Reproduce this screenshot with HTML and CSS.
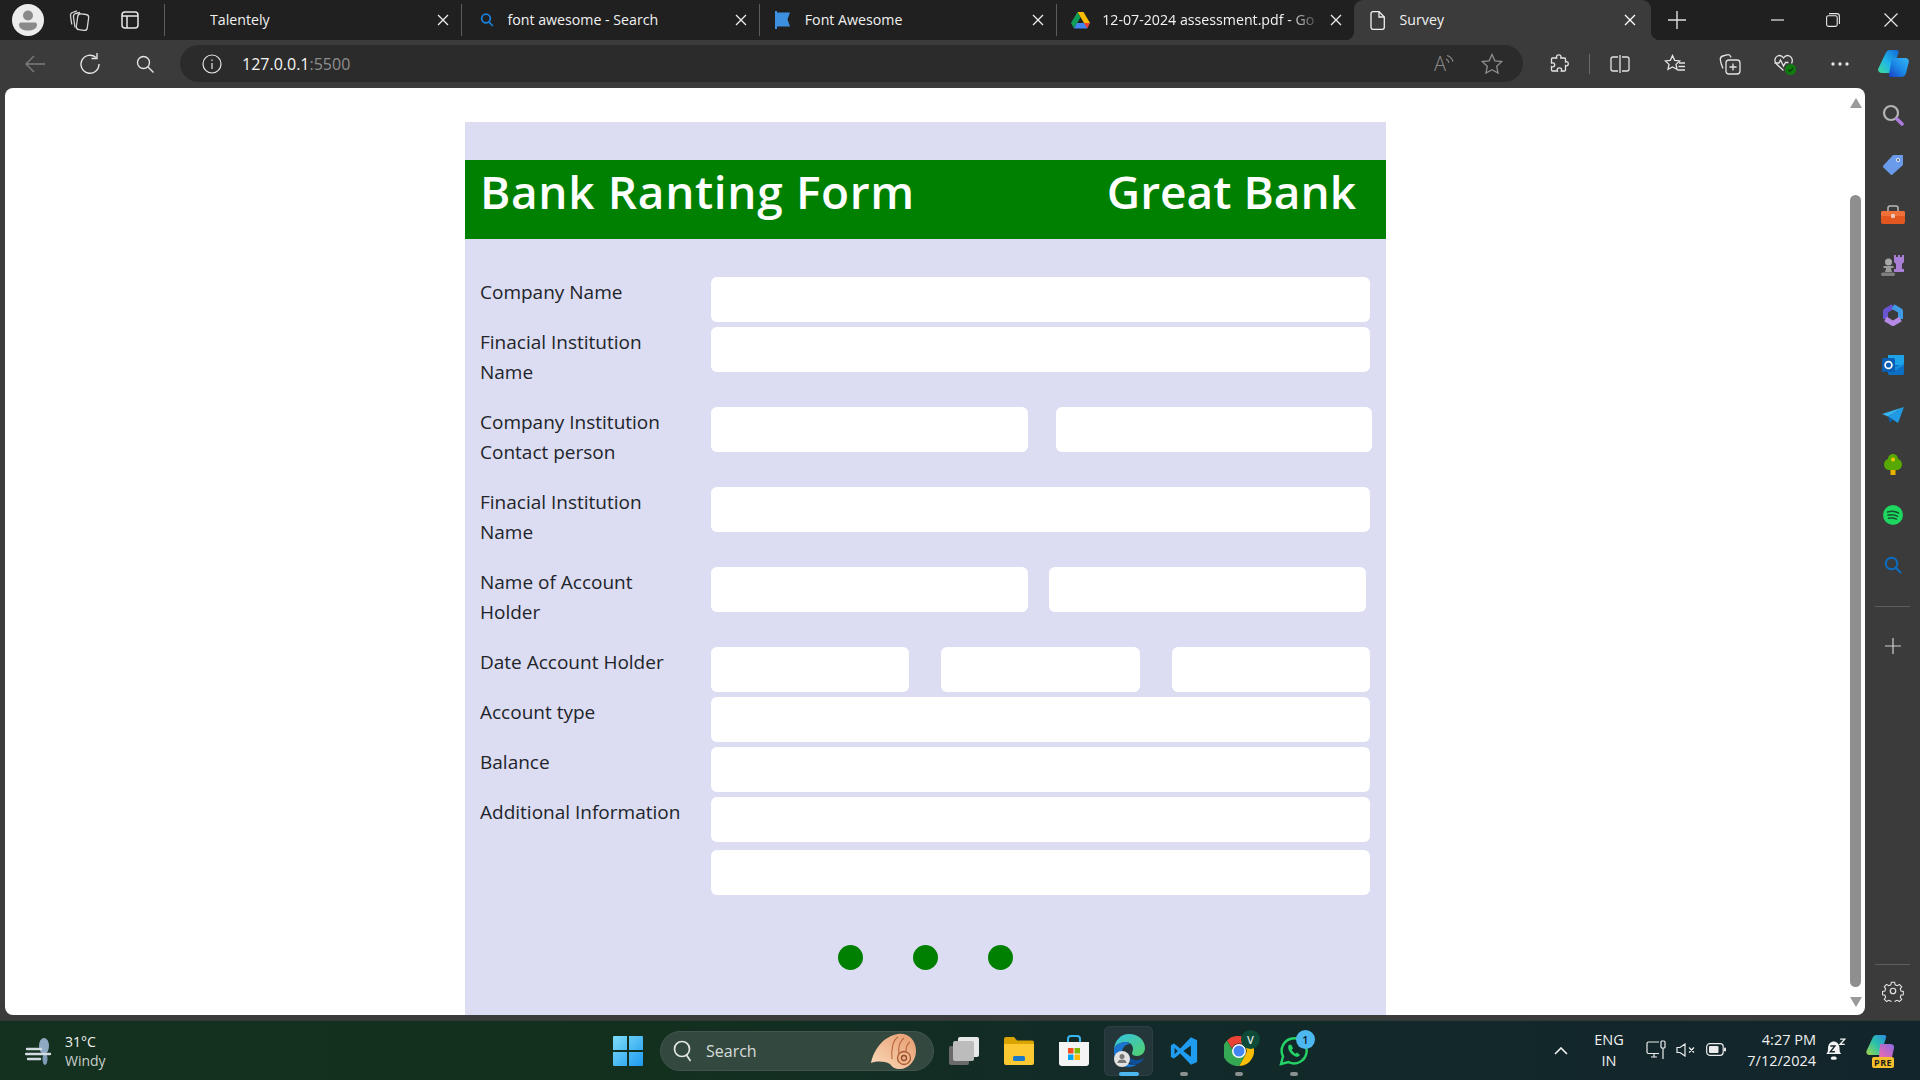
FILE: index.html
```html
<!DOCTYPE html>
<html lang="en">
<head>
    <meta charset="UTF-8">
    <meta name="viewport" content="width=device-width, initial-scale=1.0">
    <title>Survey</title>
    <link rel="stylesheet" href="styles.css">
</head>
<body>

<!-- Tab strip -->
<div class="tabstrip">
  <div class="strip-left">
    <svg class="avatar" width="32" height="32" viewBox="0 0 32 32"><circle cx="16" cy="16" r="16" fill="#ececec"/><circle cx="16" cy="11.5" r="5" fill="#8a8a8a"/><path d="M7 20.5c0-1.2 1-2 2-2h14c1 0 2 .8 2 2 0 4-4 6-9 6s-9-2-9-6z" fill="#8a8a8a"/></svg>
    <svg class="strip-icon" width="24" height="24" viewBox="0 0 24 24" fill="none" stroke="#d5d5d5" stroke-width="1.3"><rect x="10" y="6" width="11" height="16" rx="3" transform="rotate(8 15 14)"/><path d="M8 19.500 6.500 9C6.300 7 7 6 8.500 5.500L13 4.500M4.800 16.500 3.500 8C3.300 6 4 5 5.500 4.500L10 2.800"/></svg>
    <svg class="strip-icon" width="20" height="20" viewBox="0 0 20 20" fill="none" stroke="#e6e6e6" stroke-width="1.5"><rect x="2" y="2" width="16" height="16" rx="3"/><path d="M2 6h16M7 6v12" /></svg>
  </div>
  <div class="tab">
    <span class="fav"></span>
    <span class="tab-title">Talentely</span>
    <svg class="tab-x" width="12" height="12" viewBox="0 0 12 12"><path d="M1 1l10 10M11 1L1 11" stroke="#eee" stroke-width="1.300"/></svg>
  </div>
  <div class="tab">
    <span class="fav"><svg width="16" height="16" viewBox="0 0 16 16" fill="none" stroke="#1a7fd6" stroke-width="1.800"><circle cx="7" cy="6.500" r="4.300"/><path d="M10 10l3.800 4"/></svg></span>
    <span class="tab-title">font awesome - Search</span>
    <svg class="tab-x" width="12" height="12" viewBox="0 0 12 12"><path d="M1 1l10 10M11 1L1 11" stroke="#eee" stroke-width="1.300"/></svg>
  </div>
  <div class="tab">
    <span class="fav fav-left"><svg width="18" height="18" viewBox="0 0 18 18"><path d="M1 0h2v1.500h13l-2.500 7 2.500 7H3V18H1z" fill="#3d8fe0"/></svg></span>
    <span class="tab-title">Font Awesome</span>
    <svg class="tab-x" width="12" height="12" viewBox="0 0 12 12"><path d="M1 1l10 10M11 1L1 11" stroke="#eee" stroke-width="1.300"/></svg>
  </div>
  <div class="tab">
    <span class="fav fav-left"><svg width="19" height="17" viewBox="0 0 19 17"><path d="M6.500 0h6l6.500 11h-6z" fill="#fbbc04"/><path d="M6.500 0 0 11l3 5.500L9.500 5.500z" fill="#0f9d58"/><path d="M3 16.500h13l3-5.500H6z" fill="#4285f4"/><path d="M13 11h6l-3 5.500z" fill="#ea4335"/></svg></span>
    <span class="tab-title tab-fade">12-07-2024 assessment.pdf - Go</span>
    <svg class="tab-x" width="12" height="12" viewBox="0 0 12 12"><path d="M1 1l10 10M11 1L1 11" stroke="#eee" stroke-width="1.300"/></svg>
  </div>
  <div class="tab tab-active">
    <span class="fav fav-left"><svg width="15" height="19" viewBox="0 0 15 19" fill="none" stroke="#f0f0f0" stroke-width="1.300"><path d="M3 .7h6L14.300 6v10.300a2 2 0 0 1-2 2H3a2 2 0 0 1-2-2V2.700a2 2 0 0 1 2-2z"/><path d="M9 .7V6h5.300"/></svg></span>
    <span class="tab-title">Survey</span>
    <svg class="tab-x" width="12" height="12" viewBox="0 0 12 12"><path d="M1 1l10 10M11 1L1 11" stroke="#fff" stroke-width="1.300"/></svg>
  </div>
  <div class="new-tab"><svg width="18" height="18" viewBox="0 0 18 18"><path d="M9 0v18M0 9h18" stroke="#e0e0e0" stroke-width="1.400"/></svg></div>
  <div class="win-controls">
    <span class="win-btn"><svg width="13" height="2" viewBox="0 0 13 2"><path d="M0 1h13" stroke="#e8e8e8" stroke-width="1.200"/></svg></span>
    <span class="win-btn"><svg width="14" height="14" viewBox="0 0 14 14" fill="none" stroke="#e8e8e8" stroke-width="1.100"><rect x=".6" y="2.800" width="10.600" height="10.600" rx="1.800"/><path d="M3 .6h8a2.400 2.400 0 0 1 2.400 2.400v8"/></svg></span>
    <span class="win-btn"><svg width="14" height="14" viewBox="0 0 14 14"><path d="M.5.500l13 13M13.500.500l-13 13" stroke="#e8e8e8" stroke-width="1.200"/></svg></span>
  </div>
</div>

<!-- Toolbar -->
<div class="toolbar">
  <div class="nav-btns">
    <span class="tbtn"><svg width="20" height="18" viewBox="0 0 20 18" fill="none" stroke="#7c7c7c" stroke-width="1.400"><path d="M20 9H1M9 1 1 9l8 8"/></svg></span>
    <span class="tbtn"><svg width="20" height="22" viewBox="0 0 20 22" fill="none" stroke="#e4e4e4" stroke-width="1.400"><path d="M16 4.500A9 9 0 1 0 19 11"/><path d="M17 0v5.500h-5.500"/></svg></span>
    <span class="tbtn"><svg width="18" height="18" viewBox="0 0 18 18" fill="none" stroke="#e4e4e4" stroke-width="1.400"><circle cx="7.500" cy="7.500" r="6"/><path d="M12 12l5.500 5.500"/></svg></span>
  </div>
  <div class="address">
    <svg class="info" width="20" height="20" viewBox="0 0 20 20" fill="none" stroke="#e4e4e4" stroke-width="1.200"><circle cx="10" cy="10" r="9"/><path d="M10 9v6M10 5.500v1.400"/></svg>
    <span class="url">127.0.0.1<span class="url-port">:5500</span></span>
    <span class="addr-right">
      <span class="aloud">A</span>
      <svg class="aloud-waves" width="9" height="10" viewBox="0 0 9 10" fill="none" stroke="#8a8a8a" stroke-width="1.200"><path d="M1 5c1.500.6 2.500 2 3 3.800M2 1.500c3 .8 5 3 6 6"/></svg>
      <svg class="addr-star" width="22" height="22" viewBox="0 0 22 22" fill="none" stroke="#8e8e8e" stroke-width="1.300"><path d="M11 1.500l2.900 6.300 6.800.8-5 4.700 1.300 6.800L11 16.800l-6 3.300 1.300-6.800-5-4.700 6.800-.8z"/></svg>
    </span>
  </div>
  <div class="tool-btns">
    <span class="tbtn"><svg width="20" height="20" viewBox="0 0 20 20" fill="none" stroke="#e4e4e4" stroke-width="1.300"><path d="M7.500 2.800C7.500 1.500 8.500.8 9.800.8s2.200.8 2.200 2c0 .5-.1.800-.2 1.200h3.700c.6 0 1 .4 1 1v3c.5-.3 1-.4 1.300-.3 1.100.1 1.500 1 1.500 2.100s-.6 2.100-1.700 2.100c-.4 0-.8-.1-1.100-.3v4.400c0 .6-.4 1-1 1h-3.200c.2-.5.300-.9.300-1.300 0-1-1-1.800-2.200-1.800s-2.200.8-2.200 1.800c0 .4.100.8.300 1.300H3.500c-.6 0-1-.4-1-1v-3.500c.5.200 1 .3 1.300.3 1.100 0 1.900-.9 1.900-2s-.8-2-1.900-2c-.3 0-.8.100-1.300.3V5c0-.6.400-1 1-1h4.200c-.1-.4-.2-.8-.2-1.200z"/></svg></span>
    <span class="tool-sep"></span>
    <span class="tbtn"><svg width="20" height="20" viewBox="0 0 20 20" fill="none" stroke="#e4e4e4" stroke-width="1.300"><path d="M8 3H3a2 2 0 0 0-2 2v10a2 2 0 0 0 2 2h5M12 3h5a2 2 0 0 1 2 2v10a2 2 0 0 1-2 2h-5M10 1v18"/></svg></span>
    <span class="tbtn"><svg width="22" height="20" viewBox="0 0 22 20" fill="none" stroke="#e4e4e4" stroke-width="1.300"><path d="M8.500 1.500l2.200 4.800 5 .6-3.700 3.500 1 5L8.500 13 4 15.400l1-5L1.300 6.900l5-.6zM15 9h6M14.500 12.500H21M13 16h8"/></svg></span>
    <span class="tbtn"><svg width="22" height="22" viewBox="0 0 22 22" fill="none" stroke="#e4e4e4" stroke-width="1.300"><rect x="7" y="7" width="14" height="14" rx="3"/><path d="M14 10.500v7M10.500 14h7M4 15.500C2.500 12 1.500 9 1.300 6.500 1.200 4.500 2 3.500 3.800 3L8 1.800c1.500-.4 2.800.2 3.500 1.500L12 4.500"/></svg></span>
    <span class="tbtn"><svg width="24" height="24" viewBox="0 0 24 24" fill="none" stroke="#e4e4e4" stroke-width="1.300"><path d="M10.500 18.500 3.500 12C1 9.500 1.500 5.500 4.500 4c2.200-1 4.500-.2 6 1.800C12 3.800 14.300 3 16.500 4c3 1.500 3.500 4.800 2 7.500"/><path d="M1.500 11H6l1.500-3 3 6 2-3.500h3"/><circle cx="17.500" cy="17.500" r="5.500" fill="#107c10" stroke="none"/><path d="M15 17.500l2 2 3-3.500" stroke="#0b3d0b"/></svg></span>
    <span class="tbtn"><svg width="18" height="4" viewBox="0 0 18 4" fill="#e4e4e4"><circle cx="2" cy="2" r="1.700"/><circle cx="9" cy="2" r="1.700"/><circle cx="16" cy="2" r="1.700"/></svg></span>
    <span class="tbtn"><svg width="31" height="27" viewBox="0 0 31 27"><defs><linearGradient id="cpA" x1="0" y1="1" x2="1" y2="0"><stop offset="0" stop-color="#3ddc97"/><stop offset=".45" stop-color="#20b5e8"/><stop offset="1" stop-color="#1467d6"/></linearGradient><linearGradient id="cpB" x1="0" y1="1" x2="1" y2="0"><stop offset="0" stop-color="#1b3fc4"/><stop offset=".5" stop-color="#1a8ae8"/><stop offset="1" stop-color="#38b6f5"/></linearGradient></defs><path d="M8 2.500C9 .8 10.500 0 12 0h6.500c2 0 2.500 1.500 2 3L14 21c-.6 1.600-1.800 2-3 2H4C1 23-.5 21 .3 18.500z" fill="url(#cpA)"/><path d="M14 8h13c2.500 0 4.300 1.500 3.800 4l-2.600 10.500C27.600 25.500 25.500 27 23 27H13c-2 0-2.500-1.300-2-3z" fill="url(#cpB)"/></svg></span>
  </div>
</div>

<div class="main">
  <div class="viewport">
    <div class="page">

      <div class="panel">
        <div class="form-head">
          <h1 class="head-title">Bank Ranting Form</h1>
          <h1>Great Bank</h1>
        </div>

        <div class="form-row">
          <label class="row-label">Company Name</label>
          <div class="row-inputs"><input type="text"></div>
        </div>
        <div class="form-row">
          <label class="row-label">Finacial Institution Name</label>
          <div class="row-inputs"><input type="text"></div>
        </div>
        <div class="form-row">
          <label class="row-label">Company Institution Contact person</label>
          <div class="row-inputs two-wide"><input type="text"><input type="text"></div>
        </div>
        <div class="form-row">
          <label class="row-label">Finacial Institution Name</label>
          <div class="row-inputs"><input type="text"></div>
        </div>
        <div class="form-row">
          <label class="row-label">Name of Account Holder</label>
          <div class="row-inputs two-tight"><input type="text"><input type="text"></div>
        </div>
        <div class="form-row">
          <label class="row-label">Date Account Holder</label>
          <div class="row-inputs three"><input type="text"><input type="text"><input type="text"></div>
        </div>
        <div class="form-row">
          <label class="row-label">Account type</label>
          <div class="row-inputs"><input type="text"></div>
        </div>
        <div class="form-row">
          <label class="row-label">Balance</label>
          <div class="row-inputs"><input type="text"></div>
        </div>
        <div class="form-row">
          <label class="row-label">Additional Information</label>
          <div class="row-inputs stacked"><input type="text"><input type="text"></div>
        </div>

        <div class="dots">
          <span class="dot"></span>
          <span class="dot"></span>
          <span class="dot"></span>
        </div>
      </div>

    </div>
    <div class="scrollbar">
      <span class="arrow-up"></span>
      <span class="thumb"></span>
      <span class="arrow-down"></span>
    </div>
  </div>

  <!-- Edge sidebar -->
  <div class="sidebar">
    <span class="side-btn"><svg width="22" height="22" viewBox="0 0 22 22" fill="none"><circle cx="9" cy="9" r="7" stroke="#b4b4b4" stroke-width="2.200"/><path d="M15 15l5 5" stroke="#b07be0" stroke-width="3.500" stroke-linecap="round"/></svg></span>
    <span class="side-btn"><svg width="22" height="22" viewBox="0 0 22 22"><path d="M12 1h8c.6 0 1 .4 1 1v8c0 .6-.2 1-.6 1.400L10.500 20.600c-.6.500-1.300.500-1.900 0L1.400 13.400c-.5-.6-.5-1.300 0-1.900L10.600 1.600C11 1.200 11.400 1 12 1z" fill="#6a9bea"/><circle cx="16" cy="6" r="2" fill="#e8eef8"/><circle cx="16" cy="6" r="1" fill="#33476b"/></svg></span>
    <span class="side-btn"><svg width="24" height="20" viewBox="0 0 24 20"><path d="M7 6V3a2 2 0 0 1 2-2h6a2 2 0 0 1 2 2v3" fill="none" stroke="#b9b9b9" stroke-width="1.500"/><rect y="6" width="24" height="13" rx="2" fill="#e2561f"/><rect y="6" width="24" height="5" rx="1.500" fill="#f0703a"/><rect x="10" y="9" width="4" height="4" rx="1" fill="#e9c6b6"/></svg></span>
    <span class="side-btn"><svg width="24" height="24" viewBox="0 0 24 24"><path d="M13 2h2v2h2V2h2v2h2V2h2v7l-2 2v5h2v3H13v-3h2v-5l-2-2z" fill="#a97fd6"/><circle cx="7.500" cy="9" r="3.500" fill="#a8a8a8"/><path d="M2.500 13h10v2h-2.700l1.200 4H4l1.200-4H2.500z" fill="#9a9a9a"/><rect y="19.500" width="14" height="3.500" rx="1.700" fill="#7e7e7e"/></svg></span>
    <span class="side-btn"><svg width="22" height="24" viewBox="0 0 22 24" fill="none" stroke-width="5" stroke-linejoin="round"><path d="M3.500 16V8L11 3.500" stroke="#6a55d0"/><path d="M18.500 16V8L11 3.500" stroke="#3f9be6"/><path d="M18.500 16 11 20.500 3.500 16" stroke="#b58ae4"/></svg></span>
    <span class="side-btn"><svg width="22" height="20" viewBox="0 0 22 20"><path d="M6 0h16v10H6z" fill="#1fa3e8"/><path d="M6 10h16v8.500c0 .8-.7 1.500-1.500 1.500H7.500C6.700 20 6 19.300 6 18.500z" fill="#0d6fc4"/><path d="M22 8v2l-8 5-8-5V8l8 4z" fill="#1490df"/><rect y="3" width="13" height="14" rx="1.500" fill="#0a5fb4"/><circle cx="6.500" cy="10" r="3.400" fill="none" stroke="#fff" stroke-width="1.700"/></svg></span>
    <span class="side-btn"><svg width="22" height="16" viewBox="0 0 22 16"><path d="M22 0 0 7l6 2.500z" fill="#34b4f0"/><path d="M22 0 6 9.500 16 16z" fill="#1f9be6"/><path d="M6 9.500 8 16l3-3.500z" fill="#0d5fa8"/></svg></span>
    <span class="side-btn"><svg width="18" height="22" viewBox="0 0 18 22"><rect x="6.500" y="15" width="5" height="6" fill="#e8b400"/><path d="M9 0c3 0 5 2.500 5 5 2.500.5 4 3 4 5.500 0 3-2.500 5.500-5 5.500H5c-2.500 0-5-2.500-5-5.500C0 8 1.500 5.500 4 5c0-2.500 2-5 5-5z" fill="#57a800"/><circle cx="9" cy="5.500" r="2" fill="#f4c20d"/></svg></span>
    <span class="side-btn"><svg width="20" height="20" viewBox="0 0 20 20" fill="none"><circle cx="10" cy="10" r="10" fill="#1ed760"/><path d="M4.500 7c3.500-1 8-.8 11 1M5 10.300c3-.8 6.800-.6 9.500 1M5.500 13.300c2.600-.6 5.600-.4 8 .9" stroke="#14532d" stroke-width="1.500" stroke-linecap="round"/></svg></span>
    <span class="side-btn"><svg width="18" height="18" viewBox="0 0 18 18" fill="none" stroke="#0a6fc9" stroke-width="1.900"><circle cx="7.500" cy="7.500" r="5.800"/><path d="M11.800 11.800l5.200 5.200"/></svg></span>
    <span class="side-line side-line-top"></span>
    <span class="side-plus"><svg width="16" height="16" viewBox="0 0 16 16"><path d="M8 0v16M0 8h16" stroke="#cfcfcf" stroke-width="1.200"/></svg></span>
    <span class="side-line side-line-bottom"></span>
    <span class="side-gear"><svg width="22" height="22" viewBox="0 0 24 24" fill="none" stroke="#e4e4e4" stroke-width="1.300"><circle cx="12" cy="12" r="3"/><path d="M10 1.500h4l.6 3 2.600 1.100 2.600-1.600 2.700 3-1.700 2.500.8 2.500 2.900.5v4l-2.900.6-.8 2.500 1.700 2.500-2.700 2.700-2.600-1.600-2.600 1-.6 3h-4l-.6-3-2.600-1-2.600 1.600-2.800-2.800 1.700-2.500-.9-2.400-2.900-.6v-4l2.900-.5.900-2.500-1.700-2.500 2.800-3 2.600 1.600L9.400 4.500z" transform="translate(1.200 1.200) scale(.9)"/></svg></span>
  </div>
</div>

<!-- Windows taskbar -->
<div class="taskbar">
  <div class="weather">
    <svg width="30" height="30" viewBox="0 0 30 30"><ellipse cx="19" cy="10" rx="5" ry="8" fill="#8fa9c2"/><ellipse cx="20" cy="23" rx="2.500" ry="6" fill="#7f9ab5"/><path d="M2 13h14M1 18h24M3 23h12" stroke="#d3dbe2" stroke-width="2.400" stroke-linecap="round"/></svg>
    <div class="weather-text">
      <span class="temp">31°C</span>
      <span class="cond">Windy</span>
    </div>
  </div>

  <span class="task-start"><svg width="30" height="30" viewBox="0 0 30 30"><defs><linearGradient id="winA" x1="0" y1="0" x2="1" y2="1"><stop offset="0" stop-color="#7fdcf9"/><stop offset="1" stop-color="#1d9bf0"/></linearGradient></defs><path d="M1 0h13v14H0V1a1 1 0 0 1 1-1zM16 0h13a1 1 0 0 1 1 1v13H16zM0 16h14v14H1a1 1 0 0 1-1-1zM16 16h14v13a1 1 0 0 1-1 1H16z" fill="url(#winA)"/></svg></span>

  <div class="task-search">
    <svg width="20" height="22" viewBox="0 0 20 22" fill="none" stroke="#e2e6e6" stroke-width="1.700"><circle cx="9" cy="9" r="7.500"/><path d="M13.500 15l4 6"/></svg>
    <span class="search-word">Search</span>
    <svg class="shell" width="46" height="36" viewBox="0 0 46 36"><defs><linearGradient id="shA" x1="0" y1="1" x2="1" y2="0"><stop offset="0" stop-color="#fbdcbc"/><stop offset="1" stop-color="#e69a6c"/></linearGradient></defs><path d="M0 30C3 16 13 3 27 1c10-1.500 18 6 18 17 0 10-8 18-16 18-5 0-8-2-10-5C13 28 6 28 0 30z" fill="url(#shA)"/><path d="M27 4c-5 3-7 12-6 22M33 5c-4 3-6 9-5 16M39 9c-3 2-4 5-4 9" stroke="#b9643a" stroke-width="1.100" fill="none"/><circle cx="33" cy="25" r="6.500" fill="#efb48a" stroke="#a85a34" stroke-width="1.300"/><circle cx="33" cy="25" r="2.500" fill="none" stroke="#8f4a2b" stroke-width="1.300"/></svg>
  </div>

  <span class="task-app"><svg width="30" height="28" viewBox="0 0 30 28"><rect x="0" y="9" width="20" height="19" rx="2" fill="#6a6a6a"/><rect x="9" y="0" width="21" height="20" rx="2" fill="#e8e8e8"/><rect x="4" y="4" width="21" height="20" rx="2" fill="#bcbcbc"/></svg></span>
  <span class="task-app"><svg width="30" height="28" viewBox="0 0 30 28"><path d="M0 2a2 2 0 0 1 2-2h8l3 3.500h15a2 2 0 0 1 2 2V8H0z" fill="#d9a400"/><path d="M0 7h30v19a2 2 0 0 1-2 2H2a2 2 0 0 1-2-2z" fill="#fcc932"/><rect x="9" y="19" width="12" height="5" rx="1.500" fill="#1a78c8"/></svg></span>
  <span class="task-app"><svg width="30" height="32" viewBox="0 0 30 32"><path d="M9 7V4a3 3 0 0 1 3-3h6a3 3 0 0 1 3 3v3" fill="none" stroke="#38b6f0" stroke-width="2"/><path d="M0 7h30v21a3 3 0 0 1-3 3H3a3 3 0 0 1-3-3z" fill="#f4f4f4"/><rect x="9" y="13" width="5.500" height="5.500" fill="#f25022"/><rect x="15.500" y="13" width="5.500" height="5.500" fill="#7fba00"/><rect x="9" y="19.500" width="5.500" height="5.500" fill="#00a4ef"/><rect x="15.500" y="19.500" width="5.500" height="5.500" fill="#ffb900"/></svg></span>
  <span class="task-app task-active"><svg width="32" height="34" viewBox="0 0 32 34"><defs><linearGradient id="edA" x1="0" y1="0" x2="1" y2="1"><stop offset="0" stop-color="#33c2e8"/><stop offset="1" stop-color="#52d06a"/></linearGradient></defs><path d="M1 15C2 6 8 0 16 0c9 0 16 6 16 14 0 5-4 8-8 8-3 0-5-1-5-3 0-1 1-2 1-4 0-4-3-7-7-7C8 8 3 10 1 15z" fill="url(#edA)"/><path d="M1 15c2-5 7-7 12-7 2 0 3 1 4 2-5 0-8 4-8 9 0 6 5 12 12 12 2 0 3 0 4-1-3 2-6 3-9 3C7 33 0 26 1 15z" fill="#1b76d2"/><path d="M21 31c5-.5 8-3 10-7-2 1-4 2-7 2-4 0-8-2-9-5 0 5 2 9 6 10z" fill="#0f4f9a"/><circle cx="9" cy="25" r="8" fill="#e2e2e2"/><circle cx="9" cy="22.500" r="2.500" fill="#777"/><path d="M4.500 29c0-2.500 2-3.500 4.500-3.500s4.500 1 4.500 3.500z" fill="#777"/></svg></span>
  <span class="task-app task-open"><svg width="30" height="30" viewBox="0 0 24 24"><path fill-rule="evenodd" d="M17.500 1 9 10 4 6 1.500 7.300V16.700L4 18l5-4 8.500 9 5-2.300V3.300zM17.500 7.500 11.500 12l6 4.500zM4.500 9.500 7 12l-2.500 2.500z" fill="#1f9cf0"/></svg></span>
  <span class="task-app task-open chrome-app">
    <svg width="30" height="30" viewBox="0 0 30 30"><path d="M15 0a15 15 0 0 1 13 7.500H15a7.500 7.500 0 0 0-7 5L3 4.500A15 15 0 0 1 15 0z" fill="#ea4335"/><path d="M28 7.500A15 15 0 0 1 15 30l6.500-11.500A7.500 7.500 0 0 0 21 10z" fill="#fbbc04"/><path d="M3 4.500l6.500 11A7.500 7.500 0 0 0 21.500 18.500L15 30A15 15 0 0 1 3 4.500z" fill="#34a853"/><circle cx="15" cy="15" r="7" fill="#fff"/><circle cx="15" cy="15" r="5.500" fill="#4285f4"/></svg>
    <span class="chrome-badge">V</span>
  </span>
  <span class="task-app task-open wa-app">
    <svg width="30" height="30" viewBox="0 0 30 30" fill="none"><path d="M2 28l2-7.500A12.500 12.500 0 1 1 9.500 26z" stroke="#25d366" stroke-width="2.400"/><path d="M10.500 8.500c-1.500 1-2 3-.5 6 1.500 3 4 5 6.500 6 2 .7 3.500 0 4.500-1.500l-3-2.500-1.500 1.200c-1.500-.7-3-2.200-3.800-3.900l1.300-1.300-1.500-3.500z" fill="#25d366"/></svg>
    <span class="wa-badge">1</span>
  </span>

  <div class="tray">
    <span class="tray-chev"><svg width="14" height="8" viewBox="0 0 14 8" fill="none" stroke="#f0f0f0" stroke-width="1.600"><path d="M1 7l6-6 6 6"/></svg></span>
    <span class="lang">ENG<br>IN</span>
    <span class="tray-ico"><svg width="20" height="20" viewBox="0 0 20 20" fill="none" stroke="#ececec" stroke-width="1.200"><path d="M13 2H2.500A1.500 1.500 0 0 0 1 3.500V12a1.500 1.500 0 0 0 1.500 1.500H13M5 17h6M8 13.500V17M17 8v11"/><rect x="15" y="1" width="4" height="7" rx="1"/></svg></span>
    <span class="tray-ico tray-vol"><svg width="20" height="14" viewBox="0 0 20 14" fill="none" stroke="#ececec" stroke-width="1.200"><path d="M1 4.500h3L9 1v12L4 9.500H1zM13 4.500l5 5M18 4.500l-5 5"/></svg></span>
    <span class="tray-ico"><svg width="20" height="13" viewBox="0 0 20 13"><rect x=".7" y=".7" width="16.500" height="11.600" rx="3" fill="none" stroke="#ececec" stroke-width="1.200"/><rect x="3" y="3" width="9.500" height="7" rx="1" fill="#ececec"/><rect x="18" y="4.500" width="2" height="4" rx="1" fill="#ececec"/></svg></span>
    <span class="clock">4:27 PM<br>7/12/2024</span>
    <span class="tray-bell"><svg width="23" height="23" viewBox="0 0 20 20"><path d="M2 14c1-1 1.500-2 1.500-5C3.500 5 6 3 8.500 3S13.500 5 13.500 9c0 3 .5 4 1.500 5z" fill="#f2f2f2"/><rect x="6" y="16" width="5" height="3" rx="1.500" fill="#f2f2f2"/><path d="M5.500 7h4l-4 5h4" stroke="#16252b" stroke-width="1.200" fill="none"/><path d="M14 1h4l-4 4.500h4" stroke="#f2f2f2" stroke-width="1.200" fill="none"/></svg></span>
    <span class="tray-copilot"><svg width="29" height="30" viewBox="0 0 29 30"><defs><linearGradient id="cpC" x1="0" y1="1" x2="1" y2="0"><stop offset="0" stop-color="#a6d64a"/><stop offset=".5" stop-color="#2cc2a8"/><stop offset="1" stop-color="#2a8ae0"/></linearGradient><linearGradient id="cpD" x1="0" y1="1" x2="1" y2="0"><stop offset="0" stop-color="#f06ab0"/><stop offset="1" stop-color="#8b6ae0"/></linearGradient></defs><path d="M7 2c1-1.500 2-2 4-2h7c2 0 2.500 1 2 3l-5 15c-.5 1.500-1.500 2-3 2H4c-3 0-4-2-3.500-4z" fill="url(#cpC)"/><path d="M14 9h10c3 0 4.500 1.500 4 4l-2 9H13z" fill="url(#cpD)"/></svg><span class="pre-tag">PRE</span></span>
  </div>
</div>

</body>
</html>
```

FILE: styles.css
```css
* {
  box-sizing: border-box;
}

html, body {
  height: 100%;
  width: 100%;
  margin: 0;
}

body {
  display: flex;
  flex-direction: column;
  height: 1080px;
  overflow: hidden;
  background: #3b3b3b;
  font-family: 'Open Sans', sans-serif;
}

/* Tab strip */
.tabstrip {
  display: flex;
  height: 40px;
  background: #202020;
  color: #f2f2f2;
  font-size: 14.2px;
}

.strip-left {
  display: flex;
  flex: none;
  align-items: center;
  width: 164px;
  padding-left: 12px;
}
.strip-left svg {
  flex: none;
}
.avatar {
  margin: 0 23px 0 0;
}
.strip-icon {
  margin-right: 29px;
}

.tab {
  position: relative;
  display: flex;
  align-items: center;
  width: 297.4px;
  padding: 0 12px 0 0;
  background-image: linear-gradient(#5c5c5c, #5c5c5c);
  background-size: 1px 32px;
  background-position: left center;
  background-repeat: no-repeat;
}
.fav {
  display: flex;
  align-items: center;
  justify-content: center;
  width: 46px;
  padding-left: 6px;
}
.fav-left {
  padding-left: 2px;
}
.tab-title {
  flex: 1;
  padding-bottom: 2px;
  white-space: nowrap;
  overflow: hidden;
}
.tab-fade {
  margin-right: 8px;
  -webkit-mask-image: linear-gradient(90deg, #000 85%, transparent 100%);
  mask-image: linear-gradient(90deg, #000 85%, transparent 100%);
}
.tab-active {
  width: 297px;
  padding-right: 15px;
  background: #3b3b3b;
  border-radius: 9px 9px 0 0;
}
.tab-active::before,
.tab-active::after {
  content: '';
  position: absolute;
  bottom: 0;
  width: 9px;
  height: 9px;
}
.tab-active::before {
  left: -9px;
  background: radial-gradient(circle at 0 0, transparent 9px, #3b3b3b 9.5px);
}
.tab-active::after {
  right: -9px;
  background: radial-gradient(circle at 100% 0, transparent 9px, #3b3b3b 9.5px);
}

.new-tab {
  display: flex;
  align-items: center;
  justify-content: center;
  width: 52px;
}
.win-controls {
  display: flex;
  margin-left: auto;
}
.win-btn {
  display: flex;
  align-items: center;
  justify-content: center;
  width: 56px;
}
.win-btn:last-child {
  width: 59px;
}

/* Toolbar */
.toolbar {
  display: flex;
  align-items: center;
  height: 48px;
  padding: 0 0 1px 7px;
  background: #3b3b3b;
}
.nav-btns,
.tool-btns {
  display: flex;
  flex: none;
  align-items: center;
}
.tbtn {
  display: flex;
  flex: none;
  align-items: center;
  justify-content: center;
  width: 55px;
}
.tool-btns .tbtn:last-child {
  width: 53px;
}
.address {
  display: flex;
  flex: none;
  align-items: center;
  width: 1343px;
  height: 37px;
  margin-left: 8px;
  padding-left: 22px;
  border-radius: 19px;
  background: #2b2b2b;
  color: #f5f5f5;
  font-size: 16px;
}
.url {
  margin-left: 20px;
}
.url-port {
  color: #8f8f8f;
}
.addr-right {
  display: flex;
  align-items: center;
  margin-left: auto;
  margin-right: 20px;
}
.aloud {
  color: #8a8a8a;
  font-size: 20px;
  font-weight: 300;
  line-height: 24px;
}
.aloud-waves {
  margin: -10px 0 0 -1px;
}
.addr-star {
  margin-left: 27px;
}
.tool-btns {
  margin-left: 8px;
}
.tool-sep {
  flex: none;
  width: 1px;
  height: 20px;
  margin: 0 2px 0 3px;
  background: #6a6a6a;
}

/* Page area */
.main {
  display: flex;
  height: 932px;
}
.viewport {
  display: flex;
  flex: 1;
  height: 927px;
  margin-left: 5px;
  overflow: hidden;
  border-radius: 8px;
  background: #fff;
}
.page {
  display: flex;
  flex: 1;
  justify-content: center;
}
.panel {
  width: 921px;
  margin-top: 34px;
  padding: 38px 0 0 0;
  background: #dcdcf2;
  color: #212529;
  font-size: 19px;
}
.form-head {
  display: flex;
  align-items: center;
  justify-content: space-between;
  height: 79px;
  margin-bottom: 38px;
  padding: 0 30px 15px 15px;
  background: #008000;
  color: #fff;
}
.form-head h1 {
  margin: 0;
  font-size: 46px;
  font-weight: 600;
  line-height: 1.2;
}
.form-head .head-title {
  letter-spacing: .65px;
}

.form-row {
  display: flex;
  padding-left: 15px;
}
.row-label {
  width: 231px;
  padding: 0 20px 20px 0;
  line-height: 30px;
}
.row-inputs {
  display: flex;
  width: 659px;
  height: 50px;
}
.row-inputs input {
  flex: 1;
  min-width: 0;
  height: 45px;
  border: none;
  border-radius: 6px;
  background: #fff;
}
.two-wide {
  gap: 28px;
  width: 661px;
}
.two-tight {
  gap: 21px;
  width: 655px;
}
.three {
  gap: 32px;
}
.stacked {
  flex-direction: column;
  gap: 8px;
  height: 103px;
}
.stacked input {
  flex: none;
}

.dots {
  display: flex;
  justify-content: center;
  gap: 50px;
  margin-top: 45px;
}
.dot {
  width: 25px;
  height: 25px;
  border-radius: 50%;
  background: #008000;
}

/* Scrollbar */
.scrollbar {
  display: flex;
  flex-direction: column;
  align-items: center;
  width: 19px;
  padding: 10px 0 0 0;
}
.arrow-up,
.arrow-down {
  width: 0;
  height: 0;
  border-left: 6.5px solid transparent;
  border-right: 6.5px solid transparent;
}
.arrow-up {
  border-bottom: 10px solid #9a9a9a;
}
.arrow-down {
  border-top: 10px solid #9a9a9a;
}
.thumb {
  width: 11px;
  height: 792px;
  margin: 87px 0 10px;
  border-radius: 6px;
  background: #8f8f8f;
}

/* Sidebar */
.sidebar {
  display: flex;
  flex-direction: column;
  align-items: center;
  width: 55px;
  padding-top: 2px;
}
.side-btn {
  display: flex;
  align-items: center;
  justify-content: center;
  flex: none;
  width: 100%;
  height: 50px;
}
.side-line {
  flex: none;
  width: 35px;
  height: 1px;
  background: #5e5e5e;
}
.side-line-top {
  margin-top: 16px;
}
.side-plus {
  display: flex;
  margin-top: 31px;
}
.side-line-bottom {
  margin-top: 310px;
}
.side-gear {
  display: flex;
  margin-top: 15px;
}

/* Taskbar */
.taskbar {
  display: flex;
  align-items: center;
  height: 60px;
  border-top: 1px solid #2c3a36;
  background: linear-gradient(90deg, #14301f 0%, #13301f 35%, #122a29 60%, #13252c 100%);
  color: #f0f0f0;
  font-size: 14px;
}
.weather {
  display: flex;
  align-items: center;
  width: 604px;
  padding-left: 25px;
}
.weather-text {
  display: flex;
  flex-direction: column;
  margin-left: 10px;
  line-height: 19px;
}
.temp {
  font-size: 14px;
}
.cond {
  color: #c9cfcc;
}
.task-start {
  display: flex;
  justify-content: center;
  width: 47px;
}
.task-search {
  display: flex;
  align-items: center;
  width: 274px;
  height: 40px;
  margin: 0 2px 0 9px;
  padding: 0 16px 0 12px;
  border: 1px solid #415450;
  border-radius: 20px;
  background: #33493f;
  color: #d8dcda;
  font-size: 16px;
}
.search-word {
  margin-left: 13px;
}
.shell {
  margin-left: auto;
}
.task-app {
  position: relative;
  display: flex;
  align-items: center;
  justify-content: center;
  width: 55px;
  height: 50px;
}
.task-active {
  border-radius: 6px;
  background: #24363a;
  box-shadow: 0 0 0 1px #2c3f42 inset;
  width: 49px;
  margin: 0 3px;
}
.task-active::after,
.task-open::after {
  content: '';
  position: absolute;
  bottom: 0;
  left: 50%;
  height: 4px;
  border-radius: 2px;
}
.task-active::after {
  width: 20px;
  margin-left: -10px;
  background: #4db8f0;
}
.task-open::after {
  width: 8px;
  margin-left: -4px;
  background: #8a9090;
}
.chrome-badge,
.wa-badge {
  position: absolute;
  top: 4px;
  right: 6px;
  display: flex;
  align-items: center;
  justify-content: center;
  width: 19px;
  height: 19px;
  border-radius: 50%;
  font-size: 11px;
  font-weight: 600;
}
.chrome-badge {
  background: #0e4a38;
  color: #d8e6e0;
}
.wa-badge {
  background: #4db8f0;
  color: #10252c;
}

.tray {
  display: flex;
  align-items: center;
  width: 379px;
  margin-left: auto;
  padding-bottom: 2px;
  font-size: 14.5px;
  line-height: 21px;
}
.tray-chev {
  display: flex;
  justify-content: center;
  width: 40px;
  padding-top: 2px;
}
.lang {
  width: 56px;
  margin-right: 4px;
  text-align: center;
}
.tray-ico {
  display: flex;
  justify-content: center;
  width: 29px;
}
.tray-vol {
  width: 31px;
}
.clock {
  width: 86px;
  text-align: right;
  white-space: nowrap;
}
.tray-bell {
  display: flex;
  margin-left: 8px;
}
.tray-copilot {
  position: relative;
  display: flex;
  margin-left: 19px;
}
.pre-tag {
  position: absolute;
  bottom: -3px;
  left: 6px;
  padding: 0 2px;
  border-radius: 2px;
  background: #f6c02c;
  color: #1a1a1a;
  font-size: 9px;
  font-weight: 700;
  line-height: 11px;
  letter-spacing: .5px;
}
```
